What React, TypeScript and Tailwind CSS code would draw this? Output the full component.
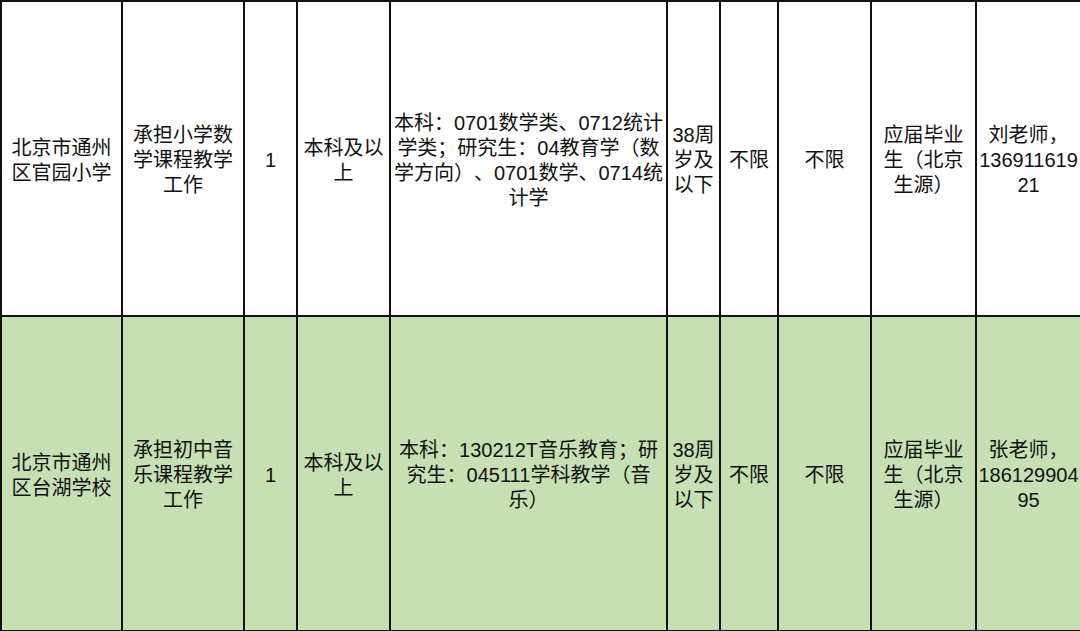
const cols = [121, 122, 53, 93, 277, 53, 58, 93, 105, 105];

type Row = { bg: string; cells: string[][] };

const rows: Row[] = [
    {
        bg: 'bg-white',
        cells: [
            ['北京市通州', '区官园小学'],
            ['承担小学数', '学课程教学', '工作'],
            ['1'],
            ['本科及以', '上'],
            ['本科：0701数学类、0712统计', '学类；研究生：04教育学（数', '学方向）、0701数学、0714统', '计学'],
            ['38周', '岁及', '以下'],
            ['不限'],
            ['不限'],
            ['应届毕业', '生（北京', '生源）'],
            ['刘老师，', '136911619', '21'],
        ],
    },
    {
        bg: 'bg-[#c6e0b4]',
        cells: [
            ['北京市通州', '区台湖学校'],
            ['承担初中音', '乐课程教学', '工作'],
            ['1'],
            ['本科及以', '上'],
            ['本科：130212T音乐教育；研', '究生：045111学科教学（音', '乐）'],
            ['38周', '岁及', '以下'],
            ['不限'],
            ['不限'],
            ['应届毕业', '生（北京', '生源）'],
            ['张老师，', '186129904', '95'],
        ],
    },
];

export default function App() {
    return (
        <div className="h-[631px] w-[1080px] overflow-hidden bg-white font-['Liberation_Sans','Noto_Sans_CJK_SC',sans-serif] text-[20px] leading-[25px] text-[#111] [text-spacing-trim:space-all]">
            <table className="w-[1079px] table-fixed border-collapse">
                <colgroup>
                    {cols.map((w, i) => (
                        <col key={i} style={{ width: w }} />
                    ))}
                </colgroup>
                <tbody>
                    {rows.map((row, r) => (
                        <tr key={r} className={`${row.bg} h-[315px]`}>
                            {row.cells.map((lines, c) => (
                                <td
                                    key={c}
                                    className="whitespace-nowrap border-2 border-[#111] px-0 pt-1 pb-0 text-center align-middle"
                                >
                                    {lines.map((line, i) => (
                                        <div key={i}>{line}</div>
                                    ))}
                                </td>
                            ))}
                        </tr>
                    ))}
                </tbody>
            </table>
        </div>
    );
}
